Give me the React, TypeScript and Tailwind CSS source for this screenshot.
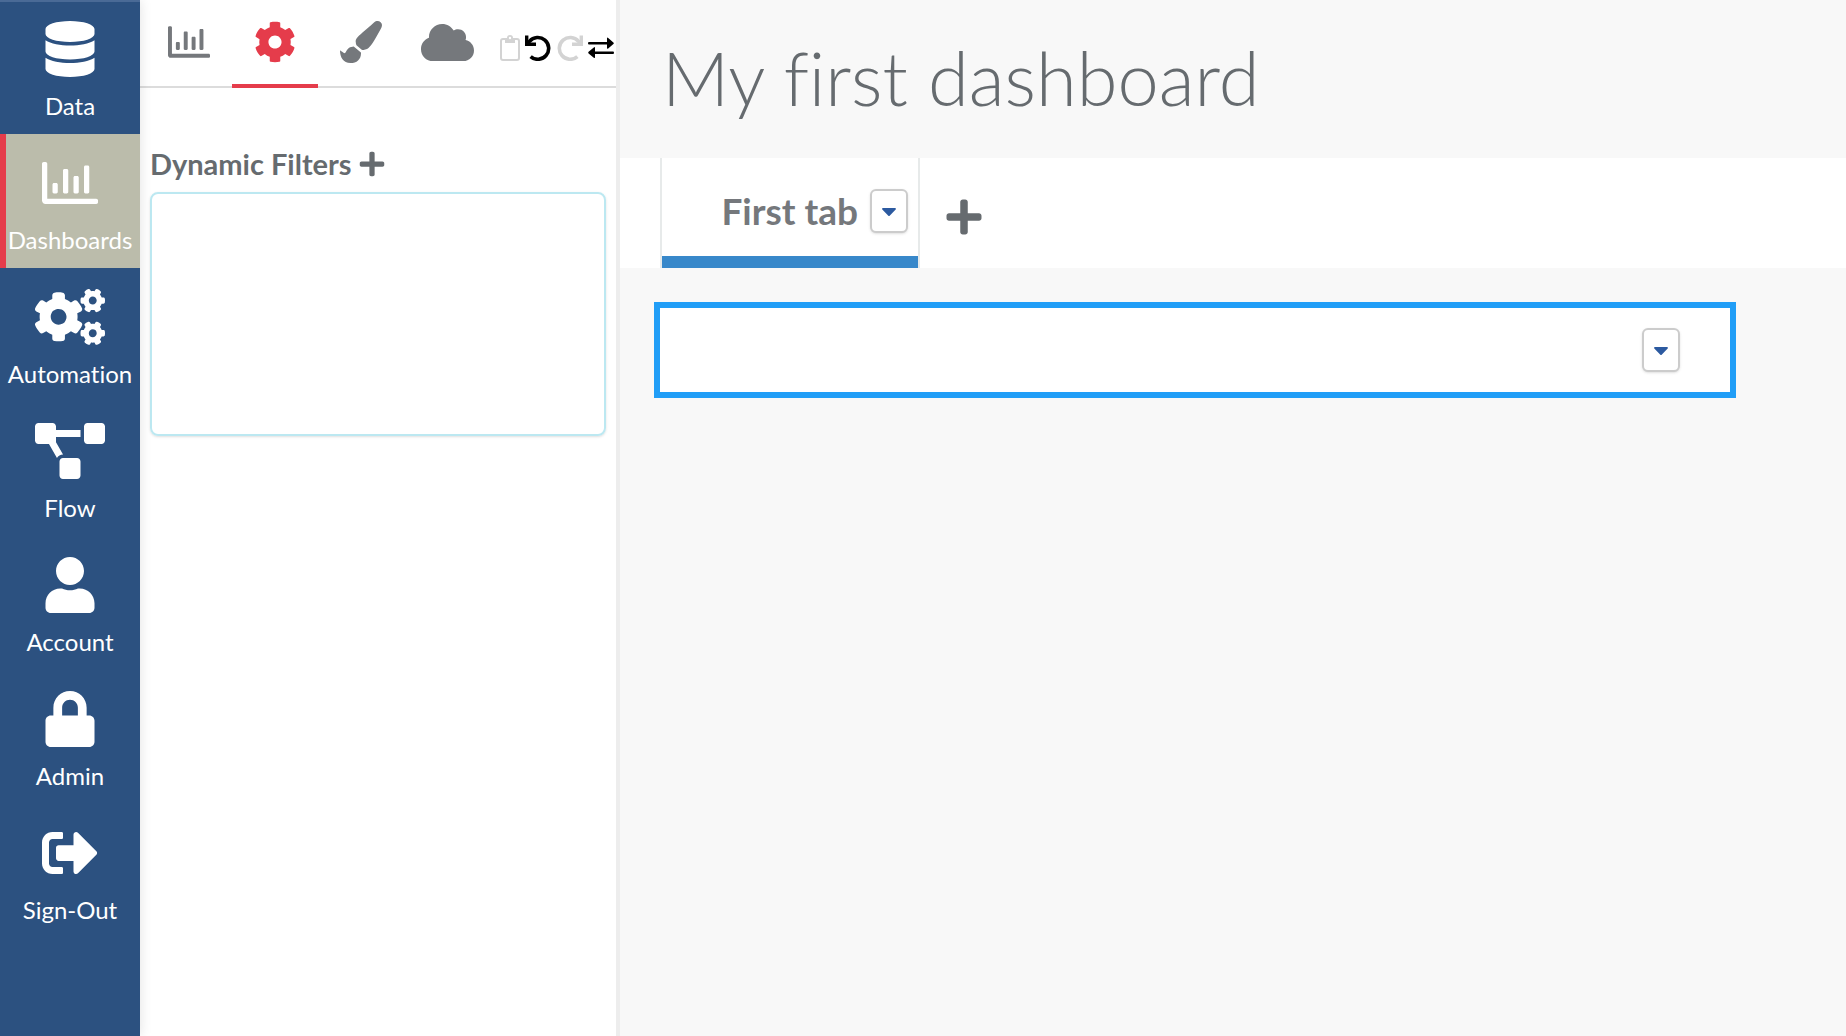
import {
  FaCaretDown,
  FaCloud,
  FaCog,
  FaCogs,
  FaDatabase,
  FaLock,
  FaPaintBrush,
  FaPlus,
  FaProjectDiagram,
  FaRegChartBar,
  FaSignOutAlt,
  FaUser,
} from "react-icons/fa";
import type { IconType } from "react-icons";

const navItems: { label: string; Icon: IconType; wide?: boolean; active?: boolean }[] = [
  { label: "Data", Icon: FaDatabase },
  { label: "Dashboards", Icon: FaRegChartBar, active: true },
  { label: "Automation", Icon: FaCogs, wide: true },
  { label: "Flow", Icon: FaProjectDiagram, wide: true },
  { label: "Account", Icon: FaUser },
  { label: "Admin", Icon: FaLock },
  { label: "Sign-Out", Icon: FaSignOutAlt },
];

function Sidebar() {
  return (
    <nav className="z-10 w-[140px] shrink-0 bg-[#2c5180] shadow-[0_0_12px_rgba(0,0,0,0.12)]">
      <div className="flex flex-col shadow-[inset_0_2px_0_#4a6a96]">
        {navItems.map(({ label, Icon, wide, active }) => (
          <a
            key={label}
            href="#"
            className={
              "flex h-[134px] flex-col items-center justify-between whitespace-nowrap pt-[21px] pb-3 text-2xl leading-8 text-white " +
              (active ? "bg-[#bbbcab] shadow-[inset_6px_0_0_#e53c4b]" : "")
            }
          >
            <Icon className={wide ? "h-14 w-[70px]" : "size-14"} />
            {label}
          </a>
        ))}
      </div>
    </nav>
  );
}

const panelTabs: { label: string; Icon: IconType; size: string; active?: boolean }[] = [
  { label: "Charts", Icon: FaRegChartBar, size: "size-[42px]" },
  { label: "Settings", Icon: FaCog, size: "size-[42px]", active: true },
  { label: "Style", Icon: FaPaintBrush, size: "size-[42px]" },
  { label: "Cloud", Icon: FaCloud, size: "size-[53px]" },
];

function ClipboardIcon() {
  return (
    <svg viewBox="0 0 20 26" className="h-[26px] w-5" fill="none" stroke="currentColor" strokeWidth="2">
      <rect x="1" y="4" width="18" height="21" rx="2" />
      <path d="M5 3h2a3 3 0 0 1 6 0h2v5H5z" fill="currentColor" stroke="none" />
      <circle cx="10" cy="3" r="1.2" fill="white" stroke="none" />
    </svg>
  );
}

function UndoIcon() {
  return (
    <svg viewBox="0 0 26 26" className="size-[26px]" fill="none" stroke="currentColor" strokeWidth="3.6">
      <path d="M5.6 21.6A10.9 10.9 0 1 0 4.500 6.300L2.500 9" />
      <path d="M0 0.500h3.400v7H11V11H0z" fill="currentColor" stroke="none" />
    </svg>
  );
}

function SwapIcon() {
  return (
    <svg viewBox="0 0 26 22" className="h-[22px] w-[26px]" fill="currentColor">
      <path d="M1 5h18V1.500q0-1.500 1.200-.5l5.200 4.400q.8.800 0 1.600l-5.200 4.400q-1.200.8-1.200-.5V7.600H1Q0 7.600 0 6.300T1 5z" />
      <path d="M25 14.400H7v-3.500q0-1.500-1.200-.5L.6 14.800q-.8.800 0 1.600l5.200 4.400q1.200.8 1.200-.5V17h18q1 0 1-1.300t-1-1.300z" />
    </svg>
  );
}

function Panel() {
  return (
    <aside className="flex w-[480px] shrink-0 flex-col border-r-4 border-[#ededed] bg-white">
      <div className="flex h-[88px] border-b-2 border-[#dcdcdc] pl-1.5">
        <div className="flex">
          {panelTabs.map(({ label, Icon, size, active }) => (
            <button
              key={label}
              aria-label={label}
              className={
                "-mb-0.5 flex w-[86px] items-center justify-center border-b-4 " +
                (active ? "border-[#e53c4b] text-[#e53c4b]" : "border-transparent text-[#75787c]")
              }
            >
              <Icon className={size} />
            </button>
          ))}
        </div>
        <div className="flex flex-1 items-center justify-between pt-2.5 pr-0.5 pl-2.5">
          <button aria-label="Paste" className="text-[#d3d3d3]"><ClipboardIcon /></button>
          <button aria-label="Undo" className="text-black"><UndoIcon /></button>
          <button aria-label="Redo" className="-scale-x-100 text-[#d3d3d3]"><UndoIcon /></button>
          <button aria-label="Swap" className="text-black"><SwapIcon /></button>
        </div>
      </div>
      <section className="px-2.5 pt-[60px]">
        <h2 className="flex h-8 items-center gap-1.5 text-[29px] font-bold text-[#666b6f]">
          Dynamic Filters
          <button aria-label="Add filter"><FaPlus className="size-7" /></button>
        </h2>
        <div className="mt-3 h-[244px] rounded-lg border-2 border-[#bce8f1] shadow-sm" />
      </section>
    </aside>
  );
}

function MenuButton({ label }: { label: string }) {
  return (
    <button
      aria-label={label}
      className="flex h-11 w-[38px] items-center justify-center rounded-md border-2 border-[#cccccc] bg-white text-[#2c5aa0] shadow-sm"
    >
      <FaCaretDown className="size-6" />
    </button>
  );
}

export default function App() {
  return (
    <div className="flex min-h-screen bg-[#f8f8f8] font-['Lato',sans-serif] [font-variant-ligatures:none]">
      <Sidebar />
      <Panel />
      <main className="min-w-0 flex-1">
        <h1 className="flex h-[158px] items-center pb-1 pl-[42px] text-[74px] font-light text-[#666b6f]">
          My first dashboard
        </h1>
        <div className="flex h-[110px] items-stretch bg-white pl-10">
          <div className="flex w-[260px] border-x-2 border-[#e7eaea]">
            <div className="flex flex-1 items-center justify-end gap-3 border-b-[12px] border-[#3888ca] pt-2 pr-2.5 text-[37px] font-bold whitespace-nowrap text-[#75787c]">
              <button>First tab</button>
              <MenuButton label="Tab menu" />
            </div>
          </div>
          <button aria-label="Add tab" className="px-6 pt-2 text-[#666b6f]">
            <FaPlus className="size-10" />
          </button>
        </div>
        <div className="mt-[34px] mr-[110px] ml-[34px] flex h-24 items-center justify-end border-[6px] border-[#219ef7] bg-white pr-[50px]">
          <MenuButton label="Widget menu" />
        </div>
      </main>
    </div>
  );
}
